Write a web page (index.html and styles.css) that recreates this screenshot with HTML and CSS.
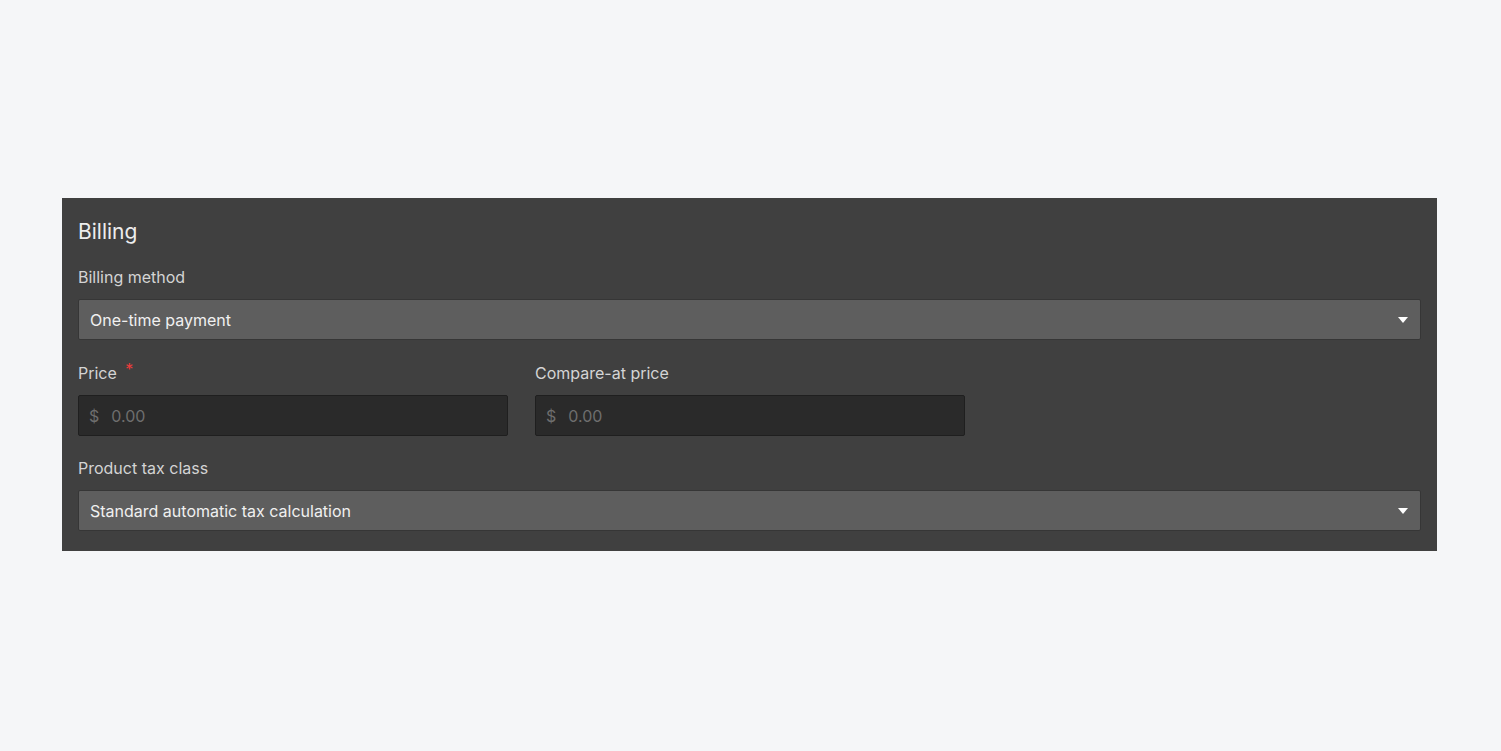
FILE: index.html
```html
<!DOCTYPE html>
<html>
<head>
    <title>Billing</title>
    <link rel="stylesheet" href="styles.css">
</head>
<body>
    <div class="panel">
        <h2>Billing</h2>

        <div class="field">
            <label>Billing method</label>
            <div class="select">
                <span>One-time payment</span>
                <span class="caret"></span>
            </div>
        </div>

        <div class="row">
            <div class="field">
                <label>Price <span class="req">*</span></label>
                <div class="money">
                    <span class="cur">$</span>
                    <span class="ph">0.00</span>
                </div>
            </div>
            <div class="field">
                <label>Compare-at price</label>
                <div class="money">
                    <span class="cur">$</span>
                    <span class="ph">0.00</span>
                </div>
            </div>
        </div>

        <div class="field">
            <label>Product tax class</label>
            <div class="select">
                <span>Standard automatic tax calculation</span>
                <span class="caret"></span>
            </div>
        </div>
    </div>
</body>
</html>
```

FILE: styles.css
```css
body {
  font-family: Inter, "Noto Sans", sans-serif;
  margin: 0;
  padding: 0;
  height: 751px;
  background-color: #f5f6f8;
}

.panel {
  margin: 198px 64px 0 62px;
  padding: 22px 16px 20px 16px;
  background-color: #404040;
  color: #e0e0e0;
}

h2 {
  margin: 0 0 24px 0;
  font-size: 21px;
  line-height: 24px;
  font-weight: 400;
  color: #ededed;
}

.field {
  margin-bottom: 24px;
}

.field:last-child {
  margin-bottom: 0;
}

.field label {
  display: block;
  font-size: 16px;
  line-height: 18px;
  margin-bottom: 13px;
  color: #d4d4d4;
}

.req {
  color: #ee3b3b;
  position: relative;
  top: -4px;
  margin-left: 4px;
}

.select {
  display: flex;
  align-items: center;
  justify-content: space-between;
  height: 39px;
  padding: 0 11px;
  background-color: #5e5e5e;
  border: 1px solid #363636;
  border-radius: 2px;
  font-size: 16px;
  color: #f0f0f0;
}

.caret {
  width: 0;
  height: 0;
  border-left: 5px solid transparent;
  border-right: 5px solid transparent;
  border-top: 6px solid #ffffff;
  margin-right: 1px;
}

.row {
  display: flex;
  gap: 27px;
  margin-bottom: 23px;
}

.row .field {
  width: 430px;
  margin-bottom: 0;
}

.money {
  display: flex;
  align-items: center;
  gap: 12px;
  height: 39px;
  padding: 0 10px;
  background-color: #2a2a2a;
  border: 1px solid #1f1f1f;
  border-radius: 2px;
  font-size: 16px;
  color: #6e6e6e;
}
```
